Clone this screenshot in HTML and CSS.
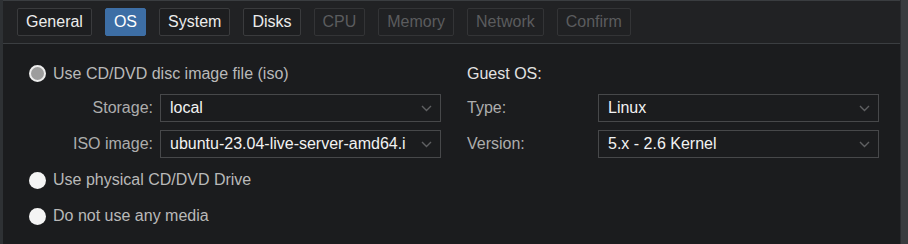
FILE: index.html
```html
<!DOCTYPE html>
<html lang="en">
<head>
    <meta charset="UTF-8">
    <title>Create VM - OS</title>
    <link rel="stylesheet" href="styles.css">
</head>
<body>
    <div class="window">
        <div class="main">
            <div class="tabs">
                <span class="tab">General</span>
                <span class="tab active">OS</span>
                <span class="tab">System</span>
                <span class="tab">Disks</span>
                <span class="tab disabled">CPU</span>
                <span class="tab disabled">Memory</span>
                <span class="tab disabled">Network</span>
                <span class="tab disabled">Confirm</span>
            </div>

            <div class="panel">
                <div class="col">
                    <div class="row first">
                        <span class="radio checked"></span>
                        <span class="radio-label">Use CD/DVD disc image file (iso)</span>
                    </div>
                    <div class="row field indent">
                        <span class="label right">Storage:</span>
                        <div class="select">
                            <span class="value">local</span>
                            <span class="arrow"><svg width="11" height="7" viewBox="0 0 11 7"><polyline points="1,1 5.5,5.5 10,1" fill="none" stroke="#5f6062" stroke-width="1.4"/></svg></span>
                        </div>
                    </div>
                    <div class="row field indent">
                        <span class="label right">ISO image:</span>
                        <div class="select">
                            <span class="value">ubuntu-23.04-live-server-amd64.iso</span>
                            <span class="arrow"><svg width="11" height="7" viewBox="0 0 11 7"><polyline points="1,1 5.5,5.5 10,1" fill="none" stroke="#5f6062" stroke-width="1.4"/></svg></span>
                        </div>
                    </div>
                    <div class="row">
                        <span class="radio"></span>
                        <span class="radio-label">Use physical CD/DVD Drive</span>
                    </div>
                    <div class="row">
                        <span class="radio"></span>
                        <span class="radio-label">Do not use any media</span>
                    </div>
                </div>

                <div class="col">
                    <div class="row first">
                        <span class="heading">Guest OS:</span>
                    </div>
                    <div class="row field">
                        <span class="label wide">Type:</span>
                        <div class="select">
                            <span class="value">Linux</span>
                            <span class="arrow"><svg width="11" height="7" viewBox="0 0 11 7"><polyline points="1,1 5.5,5.5 10,1" fill="none" stroke="#5f6062" stroke-width="1.4"/></svg></span>
                        </div>
                    </div>
                    <div class="row field">
                        <span class="label wide">Version:</span>
                        <div class="select">
                            <span class="value">5.x - 2.6 Kernel</span>
                            <span class="arrow"><svg width="11" height="7" viewBox="0 0 11 7"><polyline points="1,1 5.5,5.5 10,1" fill="none" stroke="#5f6062" stroke-width="1.4"/></svg></span>
                        </div>
                    </div>
                </div>
            </div>
        </div>
        <div class="scrollbar"></div>
    </div>
</body>
</html>
```

FILE: styles.css
```css
* { margin: 0; padding: 0; box-sizing: border-box; }
body {
    font-family: 'Liberation Sans', Arial, sans-serif;
    font-size: 16px;
    background-color: #1b1c1e;
    width: 908px;
    height: 244px;
    overflow: hidden;
}
.window {
    display: flex;
    height: 244px;
    border-left: 3px solid #2e3134;
}
.main {
    flex: 1;
}
.scrollbar {
    width: 8px;
    background-color: #393c3f;
    border-left: 1px solid #2a2c2f;
}

/* tab strip */
.tabs {
    display: flex;
    gap: 13px;
    height: 44px;
    padding: 7px 0 0 14px;
    background-color: #212224;
    border-top: 1px solid #3a3d40;
    border-bottom: 1px solid #3b3e41;
}
.tab {
    height: 28px;
    line-height: 26px;
    padding: 0 8px;
    color: #ececec;
    background-color: #1d1e20;
    border: 1px solid #3a3b3d;
    border-radius: 2px;
}
.tab.active {
    background-color: #3d6ea5;
    border-color: #3d6ea5;
    color: #fff;
}
.tab.disabled {
    color: #5b5c5e;
    background-color: #202123;
    border-color: #333436;
}

/* form */
.panel {
    display: flex;
    gap: 26px;
    padding: 13px 0 0 26px;
}
.col {
    width: 412px;
}
.row {
    display: flex;
    align-items: center;
    height: 36px;
}
.row.first {
    height: 33px;
}
.row.indent {
    padding-left: 24px;
}
.radio {
    width: 17px;
    height: 17px;
    border-radius: 50%;
    background-color: #f4f4f4;
    margin-right: 7px;
    flex-shrink: 0;
}
.radio.checked {
    background-color: #9d9d9d;
    border: 2px solid #ededed;
}
.radio-label {
    color: #b9b9b9;
}
.heading {
    color: #e2e2e2;
}
.label {
    color: #adadad;
    flex-shrink: 0;
}
.label.right {
    width: 100px;
    text-align: right;
    margin-right: 7px;
}
.label.wide {
    width: 131px;
}
.select {
    flex: 1;
    min-width: 0;
    display: flex;
    align-items: center;
    height: 28px;
    border: 1px solid #47484a;
    background-color: #1b1c1e;
    padding-left: 9px;
}
.value {
    flex: 1;
    min-width: 0;
    color: #f2f2f2;
    white-space: nowrap;
    overflow: hidden;
}
.arrow {
    width: 34px;
    display: flex;
    justify-content: flex-end;
    padding-right: 8px;
    flex-shrink: 0;
}
.arrow svg {
    display: block;
}
```
